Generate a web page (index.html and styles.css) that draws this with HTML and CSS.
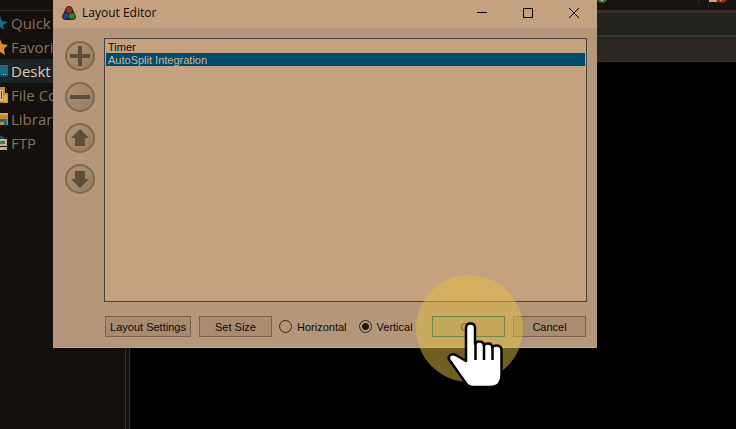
FILE: index.html
```html
<!DOCTYPE html>
<html lang="en">
<head>
<meta charset="utf-8">
<title>Layout Editor</title>
<link rel="stylesheet" href="styles.css">
</head>
<body>
<div class="desktop">
  <div class="manager">
    <nav class="sidebar">
      <a class="place" href="#"><svg class="place-icon" viewBox="0 0 16 16"><path fill="#176d89" d="M8 1l2 5 6 1-5 3 1 5-4-3-5 3 2-5-5-4h6z"/></svg>Quick</a>
      <a class="place" href="#"><svg class="place-icon" viewBox="0 0 16 16"><path fill="#d98a35" d="M8 0l2 5 6 1-4 4 1 6-5-3-5 3 1-6-4-4 6-1z"/></svg>Favori</a>
      <a class="place current" href="#"><svg class="place-icon" viewBox="0 0 16 16"><path fill="#176d89" d="M0 2h16v12H0z"/><path fill="#0d4c61" d="M0 12h16v2H0z"/><path fill="#d6c4a6" d="M11 11h1v1h-1zM13 11h1v1h-1z"/></svg>Deskt</a>
      <a class="place" href="#"><svg class="place-icon" viewBox="0 0 16 16"><path fill="#c88b34" d="M3 0h10v6h3v10H3z"/><path fill="#dfc28b" d="M8 3h3v11H8z"/><path fill="#5b4222" d="M9 4h1v8H9z"/><path fill="#e5ad4d" d="M12 8h3v7h-3z"/></svg>File Co</a>
      <a class="place" href="#"><svg class="place-icon" viewBox="0 0 16 16"><path fill="#ca872e" d="M0 2h16v12H0z"/><path fill="#e3a84b" d="M0 2h16v2H0z"/><path fill="#176d89" d="M6 8h9v6h-3v-3H6z"/></svg>Librar</a>
      <a class="place" href="#"><svg class="place-icon" viewBox="0 0 16 16"><path fill="#204c5c" d="M4 3q5-6 10 2v5H4z"/><path fill="#c1b08f" d="M6 4h9v7H6zM7 12h8v3H7z"/><path fill="#398153" d="M8 6h5v3H8z"/></svg>FTP</a>
    </nav>
    <div class="splitter"></div>
    <main class="content">
      <div class="toolbar">
        <svg class="tool add" viewBox="0 0 10 4"><path fill="#35744a" d="M0 0h10q-2 3-5 3T0 0"/><path fill="#d9c08e" d="M4 0h2v1H4z"/></svg>
        <div class="divider"></div>
        <svg class="tool remove" viewBox="0 0 18 4"><path fill="#c7a77e" d="M0 0h8v2H0z"/><path fill="#a9291e" d="M7 0h11q-2 3-5 3T7 0"/><path fill="#d9c08e" d="M11 0h1v1h-1z"/></svg>
      </div>
      <div class="tabs"></div>
      <div class="columns"></div>
    </main>
  </div>

  <form class="dialog">
    <header class="titlebar">
      <svg class="logo" viewBox="0 0 14 14"><path fill="#27231f" d="M7 0Q10 0 11 4l3 6q0 4-4 4H4q-4 0-4-4l3-6Q4 0 7 0"/><circle cx="7" cy="4" r="3" fill="#a92c24"/><circle cx="4" cy="10" r="3" fill="#293d86"/><circle cx="10" cy="10" r="3" fill="#208727"/></svg>
      <h1 class="title">Layout Editor</h1>
      <button class="caption" type="button" aria-label="Minimize"><svg viewBox="0 0 10 10"><path d="M0 4.5h10"/></svg></button>
      <button class="caption" type="button" aria-label="Maximize"><svg viewBox="0 0 10 10"><path d="M.5.5h9v9h-9z"/></svg></button>
      <button class="caption" type="button" aria-label="Close"><svg viewBox="0 0 10 10"><path d="M0 0l10 10M10 0L0 10"/></svg></button>
    </header>
    <div class="editor">
      <div class="actions">
        <button class="round" type="button" aria-label="Add"><svg viewBox="0 0 30 30"><path d="M13 5h4v8h8v4h-8v8h-4v-8H5v-4h8z"/></svg></button>
        <button class="round" type="button" aria-label="Remove"><svg viewBox="0 0 30 30"><path d="M5 13h20v4H5z"/></svg></button>
        <button class="round" type="button" aria-label="Move up"><svg viewBox="0 0 30 30"><path d="M15 6l9 9h-4v8H10v-8H6z"/></svg></button>
        <button class="round" type="button" aria-label="Move down"><svg viewBox="0 0 30 30"><path d="M10 7h10v8h4l-9 9-9-9h4z"/></svg></button>
      </div>
      <ul class="list">
        <li class="item">Timer</li>
        <li class="item selected">AutoSplit Integration</li>
      </ul>
    </div>
    <footer class="footer">
      <button class="push wide" type="button">Layout Settings</button>
      <button class="push" type="button">Set Size</button>
      <div class="choices">
        <label class="choice"><input type="radio" name="direction">Horizontal</label>
        <label class="choice"><input type="radio" name="direction" checked>Vertical</label>
      </div>
      <div class="confirm">
        <button class="push default" type="button">OK</button>
        <div class="halo"></div>
        <svg class="hand" viewBox="0 0 56 66"><path fill="#fff" stroke="#000" stroke-width="2.500" stroke-linejoin="round" d="M19 39V6q0-4.500 4.500-4.500T28 6v16q1-2.500 4-2.500 4.500 0 5 4 1-2 4-2 4 0 4.500 4 1-2 4-2 5 0 5 5v24q0 12.500-11 12.500H25q-4 0-7-5L2.500 38q-2-3 1-5t7 1z"/><path fill="none" stroke="#000" stroke-width="2.500" d="M28.500 20v18M37 23v15M45.500 25v13"/></svg>
      </div>
      <button class="push" type="button">Cancel</button>
    </footer>
  </form>
</div>
</body>
</html>
```
FILE: styles.css
```css
* { box-sizing: border-box; }
body {
  margin: 0;
  background: #000;
  font: 11px/14px "Liberation Sans", Arial, sans-serif;
}
button { font: inherit; padding: 0; margin: 0; }
.desktop { position: relative; height: 100vh; overflow: hidden; }

.manager { display: flex; height: 100%; }
.sidebar {
  flex: 0 0 125px;
  padding-top: 11px;
  background: #14100d;
}
.place {
  display: flex;
  align-items: center;
  gap: 3px;
  height: 24px;
  color: #85705c;
  font: 15px/24px "Open Sans", "Noto Sans", sans-serif;
  text-decoration: none;
  white-space: nowrap;
}
.place.current { background: #1a2426; color: #e0c8a8; }
.place-icon { flex: none; width: 16px; height: 16px; margin-left: -8px; }
.place:first-child { box-shadow: 0 -1px #35291f; }
.splitter {
  flex: 0 0 5px;
  background: #14100d;
  border: solid #383028;
  border-width: 0 1px;
}
.content { flex: 1; display: flex; flex-direction: column; background: #000; }
.toolbar {
  display: flex;
  justify-content: flex-end;
  height: 10px;
  padding-right: 9px;
  background: #18140f;
}
.tool { height: 4px; }
.add { width: 10px; }
.divider { width: 1px; height: 5px; margin: 0 10px 0 91px; background: #2c261f; }
.remove { width: 18px; }
.tabs {
  height: 27px;
  background: #22231e;
  border-top: 3px solid #343029;
  border-bottom: 2px solid #353630;
}
.columns { height: 25px; background: #2c2520; border-bottom: 1px solid #3a3027; }

.dialog {
  position: absolute;
  inset: 0 139px 81px 53px;
  display: flex;
  flex-direction: column;
  margin: 0;
  background: #b4977a;
  border-bottom: 1px solid #c8a582;
  color: #0c0908;
}
.titlebar {
  display: flex;
  align-items: center;
  height: 28px;
  padding-bottom: 3px;
  background: #c4a27f;
}
.logo { width: 14px; height: 14px; margin: 0 6px 0 9px; }
.title {
  flex: 1;
  margin: 0;
  font: 12px/16px "Open Sans", "Noto Sans", sans-serif;
}
.caption {
  display: grid;
  place-items: center;
  width: 46px;
  height: 25px;
  border: 0;
  background: none;
}
.caption svg { width: 10px; height: 10px; overflow: visible; fill: none; stroke: #0c0908; }
.editor { flex: 1; display: flex; gap: 9px; padding: 10px 10px 0 12px; }
.actions { display: flex; flex-direction: column; gap: 11px; padding-top: 3px; }
.round {
  width: 30px;
  height: 30px;
  border: 2px solid #7e6954;
  border-radius: 50%;
  background: linear-gradient(135deg, #b09376, #967b60);
}
.round svg { display: block; width: 30px; height: 30px; margin: -2px; fill: #5c4d3e; }
.list {
  flex: 1;
  margin: 0;
  padding: 1px;
  list-style: none;
  border: 1px solid #49423c;
  background: #c4a27f;
}
.item { height: 13px; padding-left: 2px; }
.item.selected { background: #004c6e; color: #d0b594; }
.footer { display: flex; align-items: center; gap: 8px; padding: 14px 11px 10px 52px; }
.push {
  flex: none;
  width: 73px;
  height: 21px;
  border: 1px solid #796350;
  background: #a98c70;
  color: #0c0908;
}
.push.wide { width: 86px; }
.push.default { display: block; border-color: #00505c; background: #ab9074; }
.choices { flex: 1; display: flex; gap: 12px; margin-left: -1px; }
.choice { display: flex; align-items: center; gap: 5px; }
.choice input {
  appearance: none;
  width: 13px;
  height: 13px;
  margin: 0;
  border: 1px solid #2a231e;
  border-radius: 50%;
}
.choice input:checked { background: radial-gradient(circle, #1b1715 3px, transparent 4px); }
.confirm { position: relative; }
.halo {
  position: absolute;
  left: -16px;
  top: -41px;
  width: 107px;
  height: 107px;
  border-radius: 50%;
  background: rgba(224, 190, 64, 0.5);
  pointer-events: none;
}
.hand {
  position: absolute;
  left: 15px;
  top: 6px;
  width: 56px;
  height: 66px;
  z-index: 1;
  pointer-events: none;
}
```
